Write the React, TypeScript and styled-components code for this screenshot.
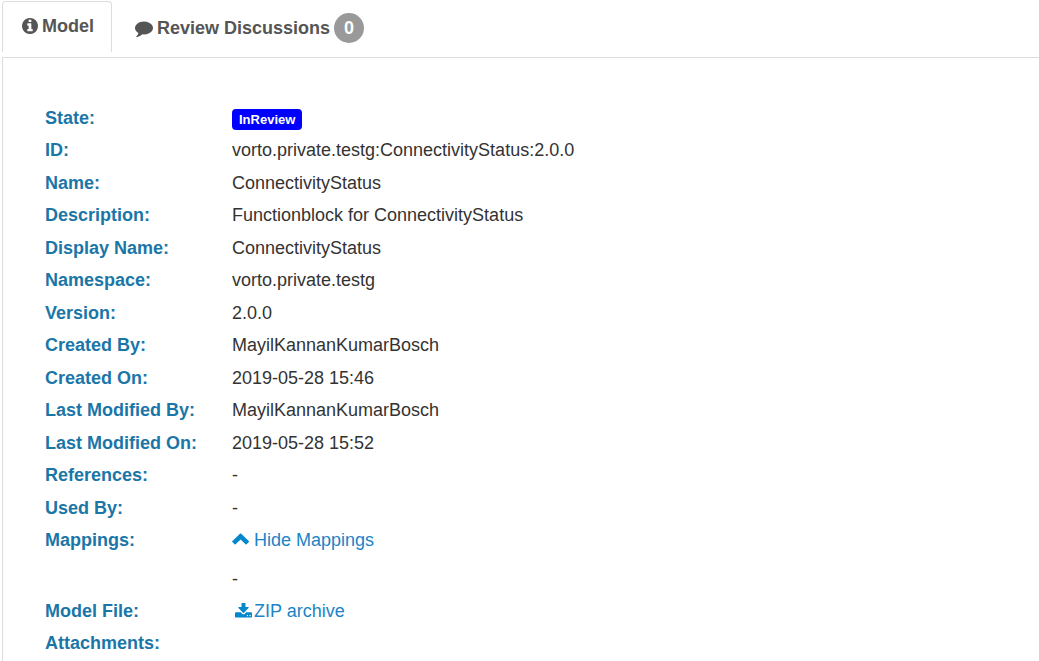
import React from "react";
import styled, { createGlobalStyle } from "styled-components";

const GlobalStyle = createGlobalStyle`
  *, *::before, *::after { box-sizing: border-box; }
  body {
    margin: 0;
    background: #fff;
    color: #333;
    font-family: "Liberation Sans", Arial, Helvetica, sans-serif;
    font-size: 18px;
    line-height: 24px;
  }
`;

const Page = styled.main`
  display: flex;
  flex-direction: column;
  min-height: 100vh;
  padding: 1px 0 0 2px;
`;

const TabList = styled.div`
  display: flex;
  align-items: flex-start;
  height: 56px;
`;

const Tab = styled.button<{ $active?: boolean }>`
  display: flex;
  align-items: center;
  gap: 4px;
  height: ${(p) => (p.$active ? 51 : 56)}px;
  padding: 0 17px 2px 19px;
  border: 1px solid ${(p) => (p.$active ? "#ddd" : "transparent")};
  border-bottom: 0;
  border-radius: 4px 4px 0 0;
  background: transparent;
  color: #555;
  font: inherit;
  font-weight: bold;
  cursor: pointer;

  & + & {
    padding: 0 22px 3px;
  }
`;

const Count = styled.span`
  width: 30px;
  height: 30px;
  border-radius: 50%;
  background: #999;
  color: #fff;
  line-height: 30px;
  text-align: center;
`;

const Panel = styled.section`
  flex: 1;
  padding: 44px 0 0 42px;
  border: solid #ddd;
  border-width: 1px 0 0 1px;
`;

const Details = styled.table`
  width: 100%;
  table-layout: fixed;
  border-collapse: collapse;
`;

const Row = styled.tr`
  height: 32px;

  &:nth-child(even) {
    height: 33px;
  }
`;

const Label = styled.th`
  width: 187px;
  padding: 4px 0;
  color: #1b76a8;
  text-align: left;
  vertical-align: top;
`;

const Value = styled.td`
  padding: 4px 0;
  vertical-align: top;
`;

const StateBadge = styled.span`
  display: block;
  width: fit-content;
  margin-top: 3px;
  padding: 0 7px;
  border-radius: 4px;
  background: #00f;
  color: #fff;
  font-size: 13px;
  font-weight: bold;
  line-height: 21px;
`;

const ActionLink = styled.a<{ $gap?: number; $indent?: number }>`
  display: flex;
  align-items: center;
  gap: ${(p) => p.$gap ?? 2}px;
  width: fit-content;
  padding-left: ${(p) => p.$indent ?? 0}px;
  color: #1c84c6;
  text-decoration: none;

  svg {
    color: #0488cc;
  }
`;

const MappingList = styled.p`
  margin: 15px 0 0;
`;

type Glyph = { d: string; x: number; y: number; w: number; h: number; width: number; height: number };

const glyphs: Record<"info" | "comment" | "up" | "download", Glyph> = {
  info: {
    x: 128, y: 128, w: 1536, h: 1536, width: 16, height: 16,
    d: "M1152 1376v-160q0-14-9-23t-23-9h-96v-512q0-14-9-23t-23-9h-320q-14 0-23 9t-9 23v160q0 14 9 23t23 9h96v320h-96q-14 0-23 9t-9 23v160q0 14 9 23t23 9h448q14 0 23-9t9-23zm-128-896v-160q0-14-9-23t-23-9h-192q-14 0-23 9t-9 23v160q0 14 9 23t23 9h192q14 0 23-9t9-23zm640 416q0 209-103 385.5t-279.5 279.5-385.5 103-385.5-103-279.5-279.5-103-385.5 103-385.5 279.5-279.5 385.5-103 385.5 103 279.5 279.5 103 385.5z",
  },
  comment: {
    x: 0, y: 0, w: 1792, h: 1792, width: 18, height: 18,
    d: "M1792 896q0 174-120 321.5t-326 233-450 85.5q-70 0-145-8-198 175-460 242-49 14-114 22-17 2-30.5-9t-17.5-29v-1q-3-4-.5-12t2-10 4.5-9.5l6-9 7-8.5 8-9q7-8 31-34.5t34.5-38 31-39.5 32.5-51 27-59 26-76q-157-89-247.5-220t-90.5-281q0-130 71-248.5t191-204.5 286-136.5 348-50.5q244 0 450 85.5t326 233 120 321.5z",
  },
  up: {
    x: 0, y: 0, w: 18, height: 18, h: 18, width: 18,
    d: "M8.2 2.6Q8.6 2.2 9 2.6L17 10.2Q17.3 10.5 17 10.8L14.4 13.4Q14.1 13.7 13.8 13.4L8.6 8.4L3.4 13.4Q3.1 13.7 2.8 13.4L.2 10.8Q-.1 10.5 .2 10.2Z",
  },
  download: {
    x: 64, y: 120, w: 1664, h: 1664, width: 17, height: 17,
    d: "M1344 1344q0-26-19-45t-45-19-45 19-19 45 19 45 45 19 45-19 19-45zm256 0q0-26-19-45t-45-19-45 19-19 45 19 45 45 19 45-19 19-45zm128-224v320q0 40-28 68t-68 28h-1472q-40 0-68-28t-28-68v-320q0-40 28-68t68-28h465l135 136q58 56 136 56t136-56l136-136h464q40 0 68 28t28 68zm-325-569q17 41-14 70l-448 448q-18 19-45 19t-45-19l-448-448q-31-29-14-70 17-39 59-39h256v-448q0-26 19-45t45-19h256q26 0 45 19t19 45v448h256q42 0 59 39z",
  },
};

function Icon({ name }: { name: keyof typeof glyphs }) {
  const g = glyphs[name];
  return (
    <svg width={g.width} height={g.height} viewBox={`${g.x} ${g.y} ${g.w} ${g.h}`} fill="currentColor" aria-hidden="true">
      <path d={g.d} />
    </svg>
  );
}

const rows: { label: string; value: React.ReactNode }[] = [
  { label: "State:", value: <StateBadge>InReview</StateBadge> },
  { label: "ID:", value: "vorto.private.testg:ConnectivityStatus:2.0.0" },
  { label: "Name:", value: "ConnectivityStatus" },
  { label: "Description:", value: "Functionblock for ConnectivityStatus" },
  { label: "Display Name:", value: "ConnectivityStatus" },
  { label: "Namespace:", value: "vorto.private.testg" },
  { label: "Version:", value: "2.0.0" },
  { label: "Created By:", value: "MayilKannanKumarBosch" },
  { label: "Created On:", value: "2019-05-28 15:46" },
  { label: "Last Modified By:", value: "MayilKannanKumarBosch" },
  { label: "Last Modified On:", value: "2019-05-28 15:52" },
  { label: "References:", value: "-" },
  { label: "Used By:", value: "-" },
  {
    label: "Mappings:",
    value: (
      <>
        <ActionLink href="#mappings" $gap={4}>
          <Icon name="up" />
          Hide Mappings
        </ActionLink>
        <MappingList id="mappings">-</MappingList>
      </>
    ),
  },
  {
    label: "Model File:",
    value: (
      <ActionLink href="#archive" $indent={3}>
        <Icon name="download" />
        ZIP archive
      </ActionLink>
    ),
  },
  { label: "Attachments:", value: null },
];

export default function App() {
  return (
    <>
      <GlobalStyle />
      <Page>
        <TabList role="tablist">
          <Tab type="button" role="tab" id="model-tab" aria-selected="true" aria-controls="model-panel" $active>
            <Icon name="info" />
            Model
          </Tab>
          <Tab type="button" role="tab" aria-selected="false">
            <Icon name="comment" />
            Review Discussions
            <Count>0</Count>
          </Tab>
        </TabList>
        <Panel role="tabpanel" id="model-panel" aria-labelledby="model-tab">
          <Details>
            <tbody>
              {rows.map((row) => (
                <Row key={row.label}>
                  <Label scope="row">{row.label}</Label>
                  <Value>{row.value}</Value>
                </Row>
              ))}
            </tbody>
          </Details>
        </Panel>
      </Page>
    </>
  );
}
